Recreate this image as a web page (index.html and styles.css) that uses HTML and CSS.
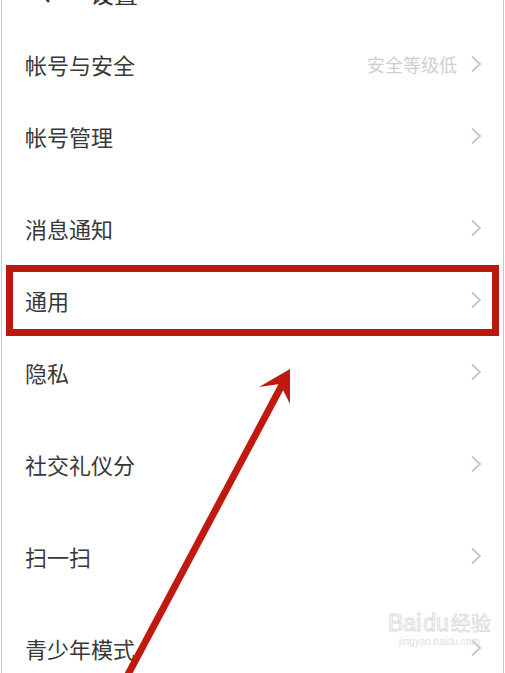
FILE: index.html
```html
<!DOCTYPE html>
<html>
<head>
  <title>设置</title>
  <link rel="stylesheet" href="styles.css">
</head>
<body>
  <div class="screen">
    <div class="top-bar">
      <svg class="back" width="14" height="22" viewBox="0 0 14 22">
        <path d="M11 2 L3 11 L11 20" fill="none" stroke="#333" stroke-width="2.4"/>
      </svg>
      <span class="title">设置</span>
    </div>

    <ul class="settings">
      <li class="row">
        <span class="label">帐号与安全</span>
        <span class="extra">安全等级低</span>
        <svg class="chev" width="12" height="18" viewBox="0 0 12 18"><path d="M2 1.5 L10 9 L2 16.5" fill="none" stroke="#c6c6c6" stroke-width="1.8"/></svg>
      </li>
      <li class="row">
        <span class="label">帐号管理</span>
        <svg class="chev" width="12" height="18" viewBox="0 0 12 18"><path d="M2 1.5 L10 9 L2 16.5" fill="none" stroke="#c6c6c6" stroke-width="1.8"/></svg>
      </li>
      <li class="row group-start">
        <span class="label">消息通知</span>
        <svg class="chev" width="12" height="18" viewBox="0 0 12 18"><path d="M2 1.5 L10 9 L2 16.5" fill="none" stroke="#c6c6c6" stroke-width="1.8"/></svg>
      </li>
      <li class="row marked">
        <span class="label">通用</span>
        <svg class="chev" width="12" height="18" viewBox="0 0 12 18"><path d="M2 1.5 L10 9 L2 16.5" fill="none" stroke="#c6c6c6" stroke-width="1.8"/></svg>
      </li>
      <li class="row">
        <span class="label">隐私</span>
        <svg class="chev" width="12" height="18" viewBox="0 0 12 18"><path d="M2 1.5 L10 9 L2 16.5" fill="none" stroke="#c6c6c6" stroke-width="1.8"/></svg>
      </li>
      <li class="row group-start">
        <span class="label">社交礼仪分</span>
        <svg class="chev" width="12" height="18" viewBox="0 0 12 18"><path d="M2 1.5 L10 9 L2 16.5" fill="none" stroke="#c6c6c6" stroke-width="1.8"/></svg>
      </li>
      <li class="row group-start">
        <span class="label">扫一扫</span>
        <svg class="chev" width="12" height="18" viewBox="0 0 12 18"><path d="M2 1.5 L10 9 L2 16.5" fill="none" stroke="#c6c6c6" stroke-width="1.8"/></svg>
      </li>
      <li class="row group-start">
        <span class="label">青少年模式</span>
        <svg class="chev" width="12" height="18" viewBox="0 0 12 18"><path d="M2 1.5 L10 9 L2 16.5" fill="none" stroke="#c6c6c6" stroke-width="1.8"/></svg>
      </li>
    </ul>

    <!-- annotation arrow drawn over the list -->
    <svg class="arrow" width="505" height="673" viewBox="0 0 505 673">
      <line x1="124" y1="680" x2="281" y2="385" stroke="#c0190f" stroke-width="7"/>
      <path d="M289 369 L258 387 L279 384 L289 404 Z" fill="#c0190f"/>
    </svg>

    <div class="watermark">
      <div class="wm-main">Bai<span class="wm-du">du</span><span class="wm-cn">经验</span></div>
      <div class="wm-url">jingyan.baidu.com</div>
    </div>
  </div>
</body>
</html>
```

FILE: styles.css
```css
/* settings screen */
body {
  margin: 0;
  background-color: #fff;
  font-family: "Noto Sans CJK SC", "Noto Sans", sans-serif;
  overflow: hidden;
}

.screen {
  position: relative;
  margin-left: 1px;
  width: 501px;
  height: 673px;
  border-left: 1px solid #c9c9c9;
  border-right: 1px solid #c9c9c9;
  overflow: hidden;
}

.top-bar {
  display: flex;
  align-items: center;
  height: 30px;
  margin-top: -22px;
  padding-left: 36px;
}

.top-bar .back {
  margin-right: 38px;
}

.top-bar .title {
  font-size: 24px;
  line-height: 30px;
  color: #333;
}

.settings {
  list-style-type: none;
  margin: 0;
  padding: 20px 0 0 0;
}

.row {
  position: relative;
  display: flex;
  align-items: center;
  height: 72px;
  padding: 0 21px 0 23px;
}

.row.group-start {
  margin-top: 20px;
}

.row .label {
  flex: 1;
  font-size: 22px;
  color: #383838;
}

.row .extra {
  font-size: 18px;
  color: #cfcfcf;
  margin-right: 13px;
}

.row .chev {
  display: block;
}

/* red annotation frame */
.marked::after {
  content: "";
  position: absolute;
  left: 4px;
  right: 4px;
  top: 1px;
  bottom: 0;
  border: 7px solid #b9170f;
}

.arrow {
  position: absolute;
  left: -1px;
  top: 0;
}

.watermark {
  position: absolute;
  left: 386px;
  top: 610px;
  color: transparent;
  text-align: center;
}

.wm-main {
  font-family: "Liberation Sans", sans-serif;
  font-size: 23px;
  line-height: 26px;
  -webkit-text-stroke: 1px #dcdcdc;
}

.wm-du {
  margin: 0 2px;
}

.wm-cn {
  font-family: "Noto Sans CJK SC", sans-serif;
  font-size: 20px;
  color: #f2f2f2;
  -webkit-text-stroke: 0.6px #d8d8d8;
}

.wm-url {
  font-family: "Liberation Sans", sans-serif;
  font-size: 10px;
  color: #e0e0e0;
  line-height: 12px;
}
```
